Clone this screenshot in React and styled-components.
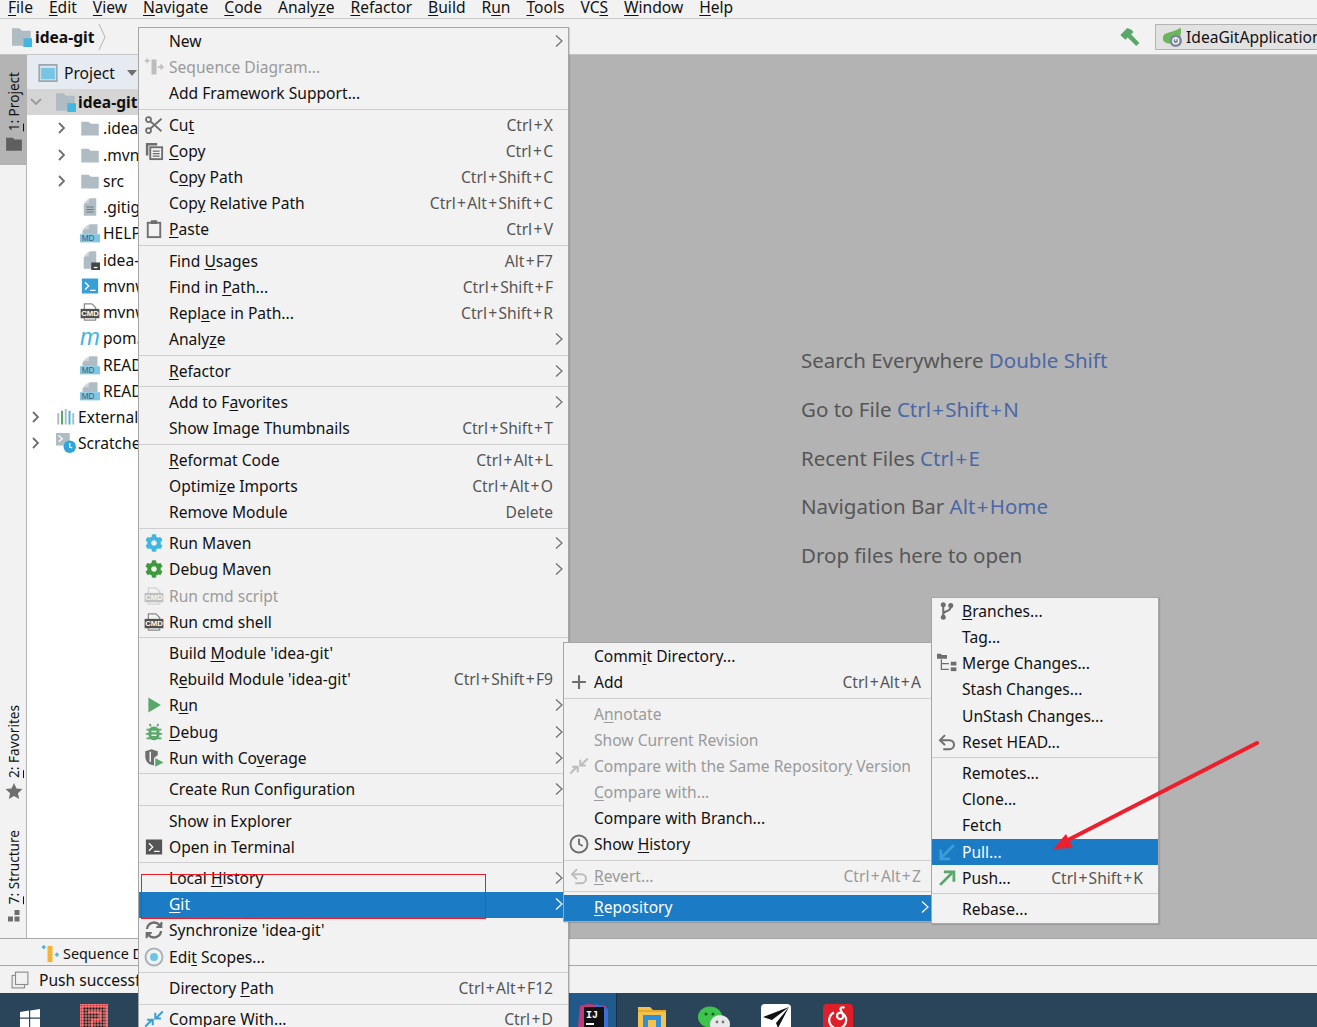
import React from "react";
import styled, { createGlobalStyle } from "styled-components";
import { FaCog } from "react-icons/fa";

const Global = createGlobalStyle`
  html, body { margin: 0; padding: 0; height: 100%; overflow: hidden; }
  body { font-family: "Noto Sans", "Open Sans", sans-serif; background: #f2f2f2; }
  #root { height: 100%; }
`;

const GRAY = "#6e6e6e";
const BLUE = "#40b6e0";
const GREEN = "#59a869";
const FOLDER = "#b0bcc4";

const Page = styled.div`
  position: relative;
  width: 1317px;
  height: 1027px;
  overflow: hidden;
  display: flex;
  flex-direction: column;
  font-size: 15.6px;
  color: #111;
`;
const MenuBar = styled.div`
  height: 18px;
  flex: none;
  display: flex;
  overflow: hidden;
  border-bottom: 1px solid #c9c9c9;
  background: #f2f2f2;
`;
const MenuBarItem = styled.span`
  padding: 0 8px;
  line-height: 14px;
  white-space: nowrap;
`;
const NavBar = styled.div`
  height: 35px;
  flex: none;
  display: flex;
  align-items: center;
  padding-left: 12px;
  border-bottom: 1px solid #c4c4c4;
  background: #f2f2f2;
`;
const Crumb = styled.span`
  font-weight: 700;
  margin: 0 3px;
`;
const NavRight = styled.div`
  margin-left: auto;
  display: flex;
  align-items: center;
  gap: 14px;
`;
const RunConfig = styled.div`
  width: 162px;
  height: 26px;
  box-sizing: border-box;
  display: flex;
  align-items: center;
  gap: 4px;
  padding-left: 6px;
  overflow: hidden;
  white-space: nowrap;
  background: #e2e2e2;
  border: 1px solid #b4b4b4;
  border-right: 0;
  svg { flex: none; }
`;
const Main = styled.div`
  flex: 1;
  min-height: 0;
  display: flex;
`;
const Stripe = styled.div`
  width: 26px;
  flex: none;
  display: flex;
  flex-direction: column;
  background: #f2f2f2;
  border-right: 1px solid #b4b4b4;
  padding-bottom: 14px;
`;
const StripeTab = styled.div`
  display: flex;
  flex-direction: column-reverse;
  align-items: center;
  gap: 4px;
  padding: ${(p) => (p.$active ? "17px 0 12px 2px" : "0 0 0 2px")};
  margin-top: ${(p) => p.$top || 0};
  background: ${(p) => (p.$active ? "#b4b4b4" : "transparent")};
  font-size: 13.6px;
  svg { flex: none; }
`;
const StripeLabel = styled.span`
  writing-mode: vertical-rl;
  transform: rotate(180deg);
  white-space: nowrap;
  line-height: 18px;
`;
const ProjectPanel = styled.div`
  width: 111px;
  flex: none;
  overflow: hidden;
  background: #fff;
`;
const PanelHeader = styled.div`
  height: 34px;
  box-sizing: border-box;
  padding: 1px 0 0 11px;
  display: flex;
  align-items: center;
  gap: 6px;
  background: #e6eaf1;
  white-space: nowrap;
  svg { flex: none; }
`;
const DropTriangle = styled.span`
  flex: none;
  margin-left: 6px;
  border: 5px solid transparent;
  border-top: 6px solid #6e6e6e;
  border-bottom: 0;
`;
const TreeRow = styled.div`
  height: 26.25px;
  display: flex;
  align-items: center;
  white-space: nowrap;
  padding-left: ${(p) => p.$indent}px;
  background: ${(p) => (p.$selected ? "#d5d5d5" : "transparent")};
  font-weight: ${(p) => (p.$selected ? 700 : 400)};
  svg { flex: none; }
`;
const TreeArrow = styled.span`
  width: ${(p) => p.$w}px;
  flex: none;
  display: flex;
  justify-content: flex-start;
`;
const TreeLabel = styled.span`
  margin-left: ${(p) => p.$gap}px;
`;
const Editor = styled.div`
  flex: 1;
  background: #b3b3b3;
  display: flex;
  flex-direction: column;
  padding: 291px 0 0 663px;
  gap: 19.8px;
  box-sizing: border-box;
  font-size: 20.5px;
  color: #565656;
`;
const Hint = styled.div`
  line-height: 29px;
  white-space: nowrap;
`;
const Key = styled.span`
  color: #4b67a6;
`;
const PlusSign = styled.span`
  margin: 0 1.3px;
`;
const ToolBar = styled.div`
  height: 23px;
  flex: none;
  display: flex;
  align-items: center;
  gap: 3px;
  padding: 3px 0 0 40px;
  border-top: 1px solid #a8a8a8;
  font-size: 14.4px;
  background: #f2f2f2;
`;
const StatusBar = styled.div`
  height: 27px;
  flex: none;
  display: flex;
  align-items: center;
  gap: 10px;
  padding-left: 11px;
  border-top: 1px solid #a8a8a8;
  background: #f2f2f2;
  svg { flex: none; }
`;
const TaskBar = styled.div`
  height: 34px;
  flex: none;
  display: flex;
  align-items: flex-start;
  background: #2a4559;
  overflow: hidden;
`;
const TaskSlot = styled.div`
  width: ${(p) => p.$w}px;
  height: 34px;
  flex: none;
  margin-left: ${(p) => p.$ml || 0}px;
  display: flex;
  justify-content: center;
  padding-top: ${(p) => p.$pt || 11}px;
  box-sizing: border-box;
  background: ${(p) => (p.$active ? "#20598a" : "transparent")};
  border-right: ${(p) => (p.$active ? "1px solid #14324a" : "0")};
  svg { flex: none; }
`;
const Menu = styled.div`
  position: absolute;
  left: ${(p) => p.$x}px;
  top: ${(p) => p.$y}px;
  width: ${(p) => p.$w}px;
  box-sizing: border-box;
  padding-top: 0.4px;
  background: #f2f2f2;
  border: 1px solid #a6a6a6;
  box-shadow: 1px 1px 1px rgba(0, 0, 0, 0.12);
`;
const Row = styled.div`
  height: 26.15px;
  box-sizing: border-box;
  padding-bottom: 1px;
  display: flex;
  align-items: center;
  white-space: nowrap;
  background: ${(p) => (p.$sel ? "#1b7bc4" : "transparent")};
  color: ${(p) => (p.$sel ? "#fff" : p.$dis ? "#9a9a9a" : "#111")};
`;
const IconSlot = styled.span`
  width: 30px;
  height: 20px;
  flex: none;
  display: flex;
  align-items: center;
  justify-content: center;
`;
const Shortcut = styled.span`
  margin-left: auto;
  padding-right: ${(p) => p.$pad}px;
  color: ${(p) => (p.$dis ? "#9a9a9a" : "#555")};
`;
const Chev = styled.svg`
  margin-left: auto;
  margin-right: ${(p) => p.$mr}px;
  width: 10px;
  height: 14px;
  flex: none;
`;
const Sep = styled.div`
  height: 5.3px;
  display: flex;
  align-items: center;
  &::after {
    content: "";
    width: 100%;
    height: 1px;
    background: #cfcfcf;
  }
`;
const Mark = styled.span`
  text-decoration: underline;
  text-underline-offset: 2px;
`;
const RedBox = styled.div`
  position: absolute;
  left: 141px;
  top: 874px;
  width: 343px;
  height: 43px;
  border: 1px solid #ee1c25;
`;
const ArrowSvg = styled.svg`
  position: absolute;
  left: 1040px;
  top: 730px;
`;

const S = ({ children, size = 20, ...p }) => (
  <svg width={size} height={size} viewBox="0 0 16 16" fill="none" {...p}>{children}</svg>
);

const Icons = {
  seq: (c1 = "#bdbdbd", c2 = "#bdbdbd") => (
    <S><path d="M2.5 1v4M.5 3h4" stroke={c1} strokeWidth="1.2" /><rect x="6" y="2" width="4" height="12" fill={c2} /><path d="M11 8h4l-1.8-2M15 8l-1.8 2" stroke={c1} strokeWidth="1.2" /></S>
  ),
  cut: () => (
    <S stroke={GRAY} strokeWidth="1.4"><circle cx="3.6" cy="3.6" r="2" /><circle cx="3.6" cy="12.4" r="2" /><path d="M5 5l9 8M5 11l9-8" /></S>
  ),
  copy: () => (
    <S><path d="M1.5 1.5h9v2H3.5v8h-2z" fill={GRAY} /><rect x="5" y="5" width="9.5" height="9.5" fill="none" stroke={GRAY} strokeWidth="1.5" /><path d="M7 8h5.5M7 10h5.5M7 12h5.5" stroke={GRAY} /></S>
  ),
  paste: () => (
    <S><rect x="3" y="3" width="10" height="11.5" stroke={GRAY} strokeWidth="1.5" /><rect x="5.5" y="1" width="5" height="3" fill={GRAY} /></S>
  ),
  gear: (c) => <FaCog size={18} color={c} />,
  cmd: (dim) => (
    <S opacity={dim ? 0.3 : 1}><path d="M3.5 5.5V1.5h6l3 3v1M3.5 13v1.5h9V13" stroke="#8a8a8a" /><rect x="0.5" y="5.5" width="15" height="7.5" fill="#505050" /><text x="8" y="11.4" fontSize="6.2" fontWeight="700" fontFamily="Liberation Sans" textAnchor="middle" fill="#fff">CMD</text></S>
  ),
  play: () => <S><path d="M3.5 2l10 6-10 6z" fill={GREEN} /></S>,
  bug: () => (
    <S><rect x="3.6" y="3.5" width="8.8" height="11" rx="4.2" fill={GREEN} /><path d="M2 6h12M1.5 9.5h13M2 13h12M5.5 3.5l-1-2M10.5 3.5l1-2" stroke={GREEN} strokeWidth="1.4" /><path d="M6 7.5h4M6 10.5h4" stroke="#f2f2f2" strokeWidth="1.2" /></S>
  ),
  cover: () => (
    <S><path d="M1 2.5L6 1l5 1.5v3L8 8v6L4.5 13C2 11.5 1 9 1 7z" fill={GRAY} /><path d="M5 3v8" stroke="#f2f2f2" strokeWidth="1.2" /><path d="M9 8l6.5 3.5L9 15z" fill={GREEN} /></S>
  ),
  term: (c = "#555") => (
    <S><rect x="1.5" y="2" width="13" height="12" fill={c} /><path d="M4 5l3 3-3 3" stroke="#fff" strokeWidth="1" /><path d="M8 11.5h4.5" stroke="#fff" /></S>
  ),
  sync: () => (
    <S stroke={GRAY} strokeWidth="1.9"><path d="M2.4 7.2A5.7 5.7 0 0 1 12.4 4" /><path d="M13.6 8.8A5.7 5.7 0 0 1 3.6 12" /><path d="M14 1.5v4.2H9.8" strokeWidth="1.4" fill={GRAY} /><path d="M2 14.5v-4.2h4.2" strokeWidth="1.4" fill={GRAY} /></S>
  ),
  scope: () => (
    <S><circle cx="8" cy="8" r="6.8" stroke="#a9b4bb" strokeWidth="1.6" /><circle cx="8" cy="8" r="3.2" fill={BLUE} opacity=".75" /></S>
  ),
  compare: (c = "#389fd6", c2 = "#389fd6") => (
    <S><path d="M1 14l5-5M2.5 8.5H7V13" stroke={c} strokeWidth="1.6" /><path d="M15 2l-5 5M13.5 7.5H9V3" stroke={c2} strokeWidth="1.6" /></S>
  ),
  plus: () => <S><path d="M8 2.5v11M2.5 8h11" stroke={GRAY} strokeWidth="1.7" /></S>,
  clock: () => (
    <S stroke={GRAY} strokeWidth="1.5"><circle cx="8" cy="8" r="6.8" /><path d="M8 3.8V8l3 1.6" /></S>
  ),
  undo: (c = GRAY) => (
    <S stroke={c} strokeWidth="1.6"><path d="M3 6.5h7a3.6 3.6 0 0 1 0 7.2H5" /><path d="M6.4 2.5L2.4 6.5l4 4" /></S>
  ),
  branch: () => (
    <S><path d="M5 3v10M5 10.5c0-2.8 6-1.8 6-6" stroke={GRAY} strokeWidth="1.6" /><circle cx="5" cy="3" r="2" fill={GRAY} /><circle cx="5" cy="13" r="2" fill={GRAY} /><circle cx="11" cy="3.5" r="2" fill={GRAY} /></S>
  ),
  merge: () => (
    <S><path d="M0 0.5h3l1 1h4v3H0z" fill={GRAY} /><path d="M3.5 5v8h6M3.5 8.5h6" stroke={GRAY} /><rect x="11" y="7" width="4.5" height="3" fill={GRAY} /><rect x="11" y="11.5" width="4.5" height="3" fill={GRAY} /></S>
  ),
  pull: () => <S><path d="M13.5 2.5L4 12" stroke="#389fd6" strokeWidth="2.2" /><path d="M3 6v7.5h7.5" stroke="#389fd6" strokeWidth="2.2" /></S>,
  push: () => <S><path d="M2.5 13.5L12 4" stroke={GREEN} strokeWidth="2.2" /><path d="M5.5 3h8v8" stroke={GREEN} strokeWidth="2.2" /></S>,
  folder: (size = 20) => (
    <S size={size}><path d="M1 3h6l1.5 1.6H15V14H1z" fill={FOLDER} /></S>
  ),
  module: () => (
    <S><path d="M0 1h6l2 2h7v7H9v5H0z" fill={FOLDER} /><rect x="9" y="9" width="7" height="7" fill={BLUE} /></S>
  ),
  file: () => (
    <S><path d="M8 1h5v14H3V6z" fill={FOLDER} /><path d="M7 1v4H3z" fill="#cfd6db" /><path d="M5 8h6M5 10h6M5 12h6" stroke="#6d7a82" strokeWidth=".9" /></S>
  ),
  md: () => (
    <S><path d="M8 1h6v8H2V6z" fill={FOLDER} /><path d="M7 1v4H2z" fill="#cfd6db" /><rect x="0" y="9" width="16" height="6.5" fill="#7ec6e4" /><text x="6.5" y="14.6" fontSize="6.6" fontFamily="Liberation Sans" textAnchor="middle" fill="#49606e">MD</text></S>
  ),
  ideaFile: () => (
    <S><path d="M8 1h5v14H3V6z" fill={FOLDER} /><path d="M7 1v4H3z" fill="#cfd6db" /><rect x="9" y="10" width="7" height="6" fill="#444" /><path d="M11 14h3" stroke="#fff" /></S>
  ),
  m: () => (
    <S><text x="8" y="13.5" fontSize="19" fontStyle="italic" fontFamily="Liberation Sans" textAnchor="middle" fill={BLUE}>m</text></S>
  ),
  libs: () => (
    <S><path d="M1 5h1.6v9H1z" fill={FOLDER} /><path d="M4 3h1.6v11H4z" fill={GREEN} /><path d="M7 1.5h1.6V14H7z" fill={FOLDER} /><path d="M10 3h1.6v11H10z" fill={BLUE} /><path d="M13 5h1.6v9H13z" fill={FOLDER} /></S>
  ),
  scratch: () => (
    <S><rect x="0" y="0" width="11" height="10" fill={FOLDER} /><path d="M2 2l3 2.5L2 7" stroke="#fff" /><circle cx="11" cy="11" r="5" fill="#2fa5dc" /><path d="M11 8v3.2l2 .8" stroke="#fff" /></S>
  ),
  panel: () => (
    <S><rect x="1" y="1.5" width="14" height="13" fill="#dbe3ea" stroke="#9aa7b0" strokeWidth="1.4" /><rect x="2.5" y="4" width="11" height="9" fill={BLUE} opacity=".65" /></S>
  ),
  hammer: () => (
    <S size={22}><path d="M1 6.5L6 1.5l3 1.2 1.6 1.6L8.8 6l6 6.3-2.3 2.2-6.2-6.2L4.6 10z" fill={GREEN} /></S>
  ),
  spring: () => (
    <S><path d="M15 0.5c1 5-1 11-7 12.5C4 14 0 12 .8 8 1.6 3.5 8 5 15 .5z" fill="#6cb65a" /><circle cx="11" cy="11" r="5" fill="#7b8a96" /><circle cx="11" cy="11" r="2.4" stroke="#fff" /><path d="M11 8.2V11" stroke="#fff" /></S>
  ),
  dots: () => (
    <S size={16}><rect x="8.5" y="2" width="5" height="5" fill={GRAY} /><rect x="2" y="8.5" width="5" height="5" fill={GRAY} /><rect x="8.5" y="8.5" width="5" height="5" fill={GRAY} /></S>
  ),
  star: () => (
    <S size={18}><path d="M8 .8l2.2 4.9 5.3.6-4 3.6 1.1 5.3L8 12.5l-4.6 2.7 1.1-5.3-4-3.6 5.3-.6z" fill={GRAY} /></S>
  ),
  darkFolder: () => <S size={18}><path d="M1 2.5h6L8.5 4H15v10H1z" fill="#5f5f5f" /></S>,
  tool: () => <S size={18}><rect x="1" y="4" width="11" height="11" stroke="#8c8c8c" /><rect x="4" y="1" width="11" height="11" fill="#f2f2f2" stroke="#8c8c8c" /></S>,
  seqColor: () => (
    <S><path d="M3 1v3M1.5 2.5h3" stroke={BLUE} strokeWidth="1.4" /><rect x="6" y="1.5" width="4" height="13" fill="#f5b233" /><path d="M12 8.5l3 0M13.5 7v3" stroke={BLUE} strokeWidth="1.4" /></S>
  ),
};

const chevron = (sel, mr) => (
  <Chev $mr={mr} viewBox="0 0 10 14"><path d="M2 1.5L8 7l-6 5.5" fill="none" stroke={sel ? "#fff" : "#6e6e6e"} strokeWidth="1.2" /></Chev>
);

const Label = ({ text }) => {
  const i = text.indexOf("_");
  if (i < 0) return <span>{text}</span>;
  return (
    <span>
      {text.slice(0, i)}
      <Mark>{text[i + 1]}</Mark>
      {text.slice(i + 2)}
    </span>
  );
};

const Keys = ({ text }) => (
  <>
    {text.split("+").map((part, i) => (
      <React.Fragment key={i}>
        {i > 0 && <PlusSign>+</PlusSign>}
        {part}
      </React.Fragment>
    ))}
  </>
);

const Item = ({ t, k, sub, icon, dis, sel, keyPad, chevGap }) => (
  <Row $sel={sel} $dis={dis}>
    <IconSlot>{icon}</IconSlot>
    <Label text={t} />
    {k && <Shortcut $dis={dis} $pad={keyPad}><Keys text={k} /></Shortcut>}
    {sub && chevron(sel, chevGap)}
  </Row>
);

const M1 = [
  { t: "New", sub: 1 },
  { t: "Sequence Diagram...", dis: 1, icon: Icons.seq() },
  { t: "Add Framework Support..." },
  0,
  { t: "Cu_t", k: "Ctrl+X", icon: Icons.cut() },
  { t: "_Copy", k: "Ctrl+C", icon: Icons.copy() },
  { t: "C_opy Path", k: "Ctrl+Shift+C" },
  { t: "Cop_y Relative Path", k: "Ctrl+Alt+Shift+C" },
  { t: "_Paste", k: "Ctrl+V", icon: Icons.paste() },
  0,
  { t: "Find _Usages", k: "Alt+F7" },
  { t: "Find in _Path...", k: "Ctrl+Shift+F" },
  { t: "Repl_ace in Path...", k: "Ctrl+Shift+R" },
  { t: "Analy_ze", sub: 1 },
  0,
  { t: "_Refactor", sub: 1 },
  0,
  { t: "Add to F_avorites", sub: 1 },
  { t: "Show Image Thumbnails", k: "Ctrl+Shift+T" },
  0,
  { t: "_Reformat Code", k: "Ctrl+Alt+L" },
  { t: "Optimi_ze Imports", k: "Ctrl+Alt+O" },
  { t: "Remove Module", k: "Delete" },
  0,
  { t: "Run Maven", sub: 1, icon: Icons.gear(BLUE) },
  { t: "Debug Maven", sub: 1, icon: Icons.gear("#3d9a3d") },
  { t: "Run cmd script", dis: 1, icon: Icons.cmd(true) },
  { t: "Run cmd shell", icon: Icons.cmd() },
  0,
  { t: "Build _Module 'idea-git'" },
  { t: "R_ebuild Module 'idea-git'", k: "Ctrl+Shift+F9" },
  { t: "R_un", sub: 1, icon: Icons.play() },
  { t: "_Debug", sub: 1, icon: Icons.bug() },
  { t: "Run with Co_verage", sub: 1, icon: Icons.cover() },
  0,
  { t: "Create Run Configuration", sub: 1 },
  0,
  { t: "Show in Explorer" },
  { t: "Open in Terminal", icon: Icons.term() },
  0,
  { t: "Local _History", sub: 1 },
  { t: "_Git", sub: 1, sel: 1 },
  { t: "Synchronize 'idea-git'", icon: Icons.sync() },
  { t: "Edi_t Scopes...", icon: Icons.scope() },
  0,
  { t: "Directory _Path", k: "Ctrl+Alt+F12" },
  0,
  { t: "Compare With...", k: "Ctrl+D", icon: Icons.compare() },
];
const M2 = [
  { t: "Comm_it Directory..." },
  { t: "Add", k: "Ctrl+Alt+A", icon: Icons.plus() },
  0,
  { t: "A_nnotate", dis: 1 },
  { t: "Show Current Revision", dis: 1 },
  { t: "Compare with the Same Repositor_y Version", dis: 1, icon: Icons.compare("#bdbdbd", "#bdbdbd") },
  { t: "_Compare with...", dis: 1 },
  { t: "Compare with Branch..." },
  { t: "Show _History", icon: Icons.clock() },
  0,
  { t: "_Revert...", k: "Ctrl+Alt+Z", dis: 1, icon: Icons.undo("#bdbdbd") },
  0,
  { t: "_Repository", sub: 1, sel: 1 },
];
const M3 = [
  { t: "_Branches...", icon: Icons.branch() },
  { t: "Tag..." },
  { t: "Merge Changes...", icon: Icons.merge() },
  { t: "Stash Changes..." },
  { t: "UnStash Changes..." },
  { t: "Reset HEAD...", icon: Icons.undo() },
  0,
  { t: "Remotes..." },
  { t: "Clone..." },
  { t: "Fetch" },
  { t: "Pull...", sel: 1, icon: Icons.pull() },
  { t: "Push...", k: "Ctrl+Shift+K", icon: Icons.push() },
  0,
  { t: "Rebase..." },
];

const MenuList = ({ items, keyPad = 15, chevGap = 4, ...p }) => (
  <Menu {...p}>
    {items.map((it, i) => (it ? <Item key={i} {...it} keyPad={keyPad} chevGap={chevGap} /> : <Sep key={i} />))}
  </Menu>
);

const BAR = ["_File", "_Edit", "_View", "_Navigate", "_Code", "Analy_ze", "_Refactor", "_Build", "R_un", "_Tools", "VC_S", "_Window", "_Help"];

const TREE = [
  { t: ".idea", i: Icons.folder(), a: 1 },
  { t: ".mvn", i: Icons.folder(), a: 1 },
  { t: "src", i: Icons.folder(), a: 1 },
  { t: ".gitignore", i: Icons.file() },
  { t: "HELP.md", i: Icons.md() },
  { t: "idea-git.iml", i: Icons.ideaFile() },
  { t: "mvnw", i: Icons.term("#389fd6") },
  { t: "mvnw.cmd", i: Icons.cmd() },
  { t: "pom.xml", i: Icons.m() },
  { t: "README.md", i: Icons.md() },
  { t: "README1.md", i: Icons.md() },
];

const arrowR = (
  <svg width="10" height="14" viewBox="0 0 10 14"><path d="M2 2l5 5-5 5" fill="none" stroke="#6e6e6e" strokeWidth="1.8" /></svg>
);
const arrowD = (
  <svg width="14" height="10" viewBox="0 0 14 10"><path d="M2 2l5 5 5-5" fill="none" stroke="#9a9a9a" strokeWidth="1.8" /></svg>
);

const Windows = () => (
  <svg width="20" height="18" viewBox="0 0 20 18"><path d="M0 3l9-1.4V8.6H0zM10.2 1.4L20 0v8.6h-9.8zM0 9.8h9V18H0zM10.2 9.8H20V18h-9.8z" fill="#fff" /></svg>
);
const RedGrid = () => (
  <svg width="28" height="24" viewBox="0 0 28 24">
    <defs>
      <pattern id="dotgrid" width="3" height="3" patternUnits="userSpaceOnUse">
        <path d="M0 0h3v3H0z" fill="none" stroke="#f6b5b5" strokeWidth=".7" />
      </pattern>
    </defs>
    <rect width="28" height="24" fill="#e8232a" />
    <rect x="3" y="3" width="22" height="21" fill="#2a0808" />
    <path d="M8 8h12v8h-8v8" fill="none" stroke="#e8232a" strokeWidth="2.6" />
    <rect width="28" height="24" fill="url(#dotgrid)" />
  </svg>
);
const IJ = () => (
  <svg width="30" height="24" viewBox="0 0 30 24">
    <path d="M2 2L10 0l18 2 2 22H0z" fill="#c13b7a" />
    <path d="M18 0l12 5v19H16z" fill="#3b6fd6" />
    <rect x="6" y="3" width="20" height="21" fill="#111" />
    <text x="8" y="14" fontSize="10" fontWeight="700" fontFamily="Liberation Mono" fill="#fff">IJ</text>
    <rect x="8" y="19" width="8" height="2" fill="#fff" />
  </svg>
);
const WinFolder = () => (
  <svg width="28" height="20" viewBox="0 0 28 20">
    <path d="M0 0h12l3 3h13v17H0z" fill="#f2c14e" />
    <path d="M0 3h28v2H0z" fill="#e6a92e" />
    <rect x="5" y="8" width="18" height="12" fill="#2f8fd8" />
    <rect x="10" y="13" width="8" height="7" fill="#f2c14e" />
  </svg>
);
const WeChat = () => (
  <svg width="32" height="22" viewBox="0 0 32 22">
    <ellipse cx="12" cy="11" rx="12" ry="10.5" fill="#3ec34c" />
    <circle cx="8" cy="8" r="1.5" fill="#1c5c22" />
    <circle cx="15" cy="8" r="1.5" fill="#1c5c22" />
    <ellipse cx="22" cy="18" rx="10" ry="9" fill="#e9e9e9" />
    <circle cx="19" cy="16" r="1.4" fill="#777" />
    <circle cx="25" cy="16" r="1.4" fill="#777" />
  </svg>
);
const Plane = () => (
  <svg width="30" height="24" viewBox="0 0 30 24">
    <rect width="30" height="30" rx="4" fill="#fff" />
    <path d="M28 3L2 13l9 3 17-13-13 16 2 5z" fill="#111" />
  </svg>
);
const Netease = () => (
  <svg width="30" height="24" viewBox="0 0 30 24">
    <rect width="30" height="30" rx="4" fill="#dd1f2a" />
    <path d="M11 8.5a8.5 8.5 0 1 0 9 1c-2.5-2-6-.5-6 2.5 0 2 2 3.5 4 3 2-.5 2.5-2.5 2-4L17.5 5.5c-.5-2 2-3 4-1.5" fill="none" stroke="#fff" strokeWidth="2.2" />
  </svg>
);

export default function App() {
  return (
    <Page>
      <Global />
      <MenuBar>
        {BAR.map((b) => (
          <MenuBarItem key={b}><Label text={b} /></MenuBarItem>
        ))}
      </MenuBar>
      <NavBar>
        {Icons.module()}
        <Crumb>idea-git</Crumb>
        <svg width="10" height="28" viewBox="0 0 10 28"><path d="M2 1l6 13-6 13" fill="none" stroke="#b4b4b4" /></svg>
        <NavRight>
          {Icons.hammer()}
          <RunConfig>
            {Icons.spring()}
            <span>IdeaGitApplication</span>
          </RunConfig>
        </NavRight>
      </NavBar>
      <Main>
        <Stripe>
          <StripeTab $active>
            {Icons.darkFolder()}
            <StripeLabel><Mark>1</Mark>: Project</StripeLabel>
          </StripeTab>
          <StripeTab $top="auto">
            {Icons.star()}
            <StripeLabel><Mark>2</Mark>: Favorites</StripeLabel>
          </StripeTab>
          <StripeTab $top="30px">
            {Icons.dots()}
            <StripeLabel><Mark>7</Mark>: Structure</StripeLabel>
          </StripeTab>
        </Stripe>
        <ProjectPanel>
          <PanelHeader>
            {Icons.panel()}
            <span>Project</span>
            <DropTriangle />
          </PanelHeader>
          <TreeRow $indent={2} $selected>
            <TreeArrow $w={27}>{arrowD}</TreeArrow>
            {Icons.module()}
            <TreeLabel $gap={2}>idea-git</TreeLabel>
          </TreeRow>
          {TREE.map((r) => (
            <TreeRow key={r.t} $indent={30}>
              <TreeArrow $w={23}>{r.a && arrowR}</TreeArrow>
              {r.i}
              <TreeLabel $gap={3}>{r.t}</TreeLabel>
            </TreeRow>
          ))}
          <TreeRow $indent={4}>
            <TreeArrow $w={25}>{arrowR}</TreeArrow>
            {Icons.libs()}
            <TreeLabel $gap={2}>External Libraries</TreeLabel>
          </TreeRow>
          <TreeRow $indent={4}>
            <TreeArrow $w={25}>{arrowR}</TreeArrow>
            {Icons.scratch()}
            <TreeLabel $gap={2}>Scratches and Consoles</TreeLabel>
          </TreeRow>
        </ProjectPanel>
        <Editor>
          <Hint>Search Everywhere <Key>Double Shift</Key></Hint>
          <Hint>Go to File <Key><Keys text="Ctrl+Shift+N" /></Key></Hint>
          <Hint>Recent Files <Key><Keys text="Ctrl+E" /></Key></Hint>
          <Hint>Navigation Bar <Key><Keys text="Alt+Home" /></Key></Hint>
          <Hint>Drop files here to open</Hint>
        </Editor>
      </Main>
      <ToolBar>
        {Icons.seqColor()}
        <span>Sequence Diagram</span>
      </ToolBar>
      <StatusBar>
        {Icons.tool()}
        <span>Push successful</span>
      </StatusBar>
      <TaskBar>
        <TaskSlot $w={60} $pt={16}><Windows /></TaskSlot>
        <TaskSlot $w={67}><RedGrid /></TaskSlot>
        <TaskSlot $w={48} $ml={442} $active><IJ /></TaskSlot>
        <TaskSlot $w={69} $pt={14}><WinFolder /></TaskSlot>
        <TaskSlot $w={56} $pt={13}><WeChat /></TaskSlot>
        <TaskSlot $w={68}><Plane /></TaskSlot>
        <TaskSlot $w={56}><Netease /></TaskSlot>
      </TaskBar>
      <MenuList items={M1} $x={138} $y={27} $w={431} />
      <MenuList items={M2} $x={563} $y={642} $w={369} keyPad={10} chevGap={1} />
      <MenuList items={M3} $x={931} $y={597} $w={228} />
      <RedBox />
      <ArrowSvg width="230" height="130" viewBox="1040 730 230 130">
        <path d="M1257 743L1068 840" stroke="#ee1f2d" strokeWidth="4" strokeLinecap="round" />
        <path d="M1053 849L1066 834L1073 848z" fill="#ee1f2d" />
      </ArrowSvg>
    </Page>
  );
}
